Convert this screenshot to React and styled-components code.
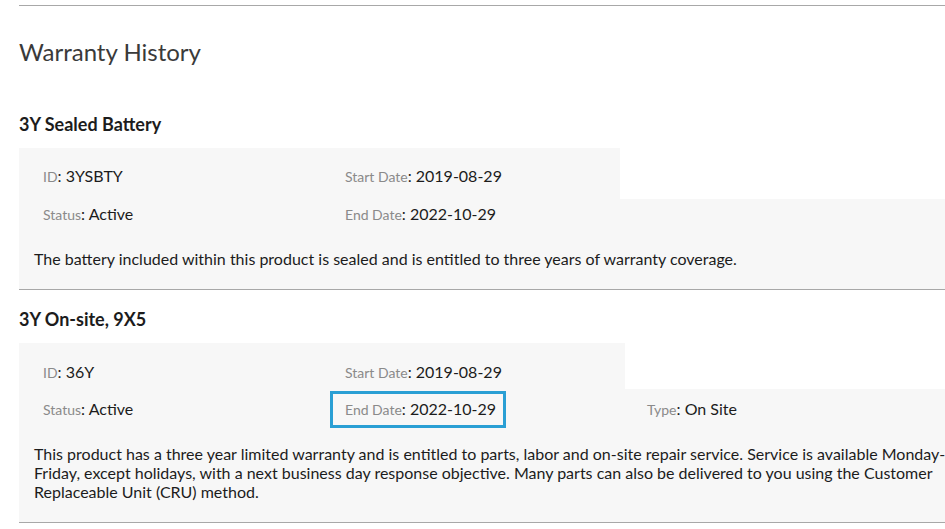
import React from "react";
import styled, { createGlobalStyle } from "styled-components";

const GlobalStyle = createGlobalStyle`
  html, body {
    margin: 0;
    padding: 0;
    background: #ffffff;
    overflow: hidden;
  }
  body {
    font-family: Lato, "Open Sans", "Liberation Sans", sans-serif;
    color: #1c1c1c;
  }
`;

// Styled components
const Page = styled.div`
  width: 980px;
  padding: 5px 0 0 19px;
  box-sizing: border-box;
`;

const TopRule = styled.hr`
  margin: 0;
  border: none;
  border-top: 1px solid #a8a8a8;
`;

const Title = styled.h1`
  margin: 30px 0 44px;
  font-size: 24px;
  line-height: 32px;
  font-weight: 400;
  color: #3a3a3a;
`;

const Section = styled.section`
  border-bottom: 1px solid #a8a8a8;
  & + & {
    margin-top: 17px;
  }
`;

const SectionTitle = styled.h2`
  margin: 0 0 12px;
  font-size: 18px;
  line-height: 24px;
  font-weight: 700;
  color: #1c1c1c;
`;

const Panel = styled.div`
  background: #ffffff;
`;

const FieldRow = styled.div`
  display: grid;
  grid-template-columns: repeat(3, 302px);
  background: #f7f7f7;
  padding: ${(p) => p.$pad};
  width: ${(p) => (p.$width ? `${p.$width}px` : "auto")};
  box-sizing: border-box;
`;

const Field = styled.div`
  font-size: 16px;
  line-height: 22px;
  color: #1c1c1c;
`;

const Label = styled.span`
  font-size: 14px;
  color: #8a8a8a;
`;

const Highlight = styled.span`
  display: inline-block;
  padding: 7px 10px 7px 15px;
  margin: -7px -10px -7px -15px;
  outline: 3px solid #2a9fd4;
  outline-offset: -3px;
`;

const Description = styled.p`
  margin: 0;
  background: #f7f7f7;
  padding: 15px 15px 21px;
  font-size: 16px;
  line-height: 19px;
  color: #1c1c1c;
`;

const warranties = [
  {
    name: "3Y Sealed Battery",
    id: "3YSBTY",
    status: "Active",
    start: "2019-08-29",
    end: "2022-10-29",
    rowWidth: 601,
    firstPad: "17px 0 11px 24px",
    secondPad: "4px 0 8px 24px",
    description:
      "The battery included within this product is sealed and is entitled to three years of warranty coverage.",
  },
  {
    name: "3Y On-site, 9X5",
    id: "36Y",
    status: "Active",
    start: "2019-08-29",
    end: "2022-10-29",
    type: "On Site",
    highlightEnd: true,
    rowWidth: 606,
    firstPad: "18px 0 5px 24px",
    secondPad: "9px 0 8px 24px",
    description:
      "This product has a three year limited warranty and is entitled to parts, labor and on-site repair service. Service is available Monday-Friday, except holidays, with a next business day response objective. Many parts can also be delivered to you using the Customer Replaceable Unit (CRU) method.",
  },
];

function Item({ label, value }) {
  return (
    <Field>
      <Label>{label}</Label>: {value}
    </Field>
  );
}

export default function App() {
  return (
    <>
      <GlobalStyle />
      <Page>
        <TopRule />
        <Title>Warranty History</Title>
        {warranties.map((w) => (
          <Section key={w.id}>
            <SectionTitle>{w.name}</SectionTitle>
            <Panel>
              <FieldRow $width={w.rowWidth} $pad={w.firstPad}>
                <Item label="ID" value={w.id} />
                <Item label="Start Date" value={w.start} />
              </FieldRow>
              <FieldRow $pad={w.secondPad}>
                <Item label="Status" value={w.status} />
                {w.highlightEnd ? (
                  <Field>
                    <Highlight>
                      <Label>End Date</Label>: {w.end}
                    </Highlight>
                  </Field>
                ) : (
                  <Item label="End Date" value={w.end} />
                )}
                {w.type && <Item label="Type" value={w.type} />}
              </FieldRow>
              <Description>{w.description}</Description>
            </Panel>
          </Section>
        ))}
      </Page>
    </>
  );
}
